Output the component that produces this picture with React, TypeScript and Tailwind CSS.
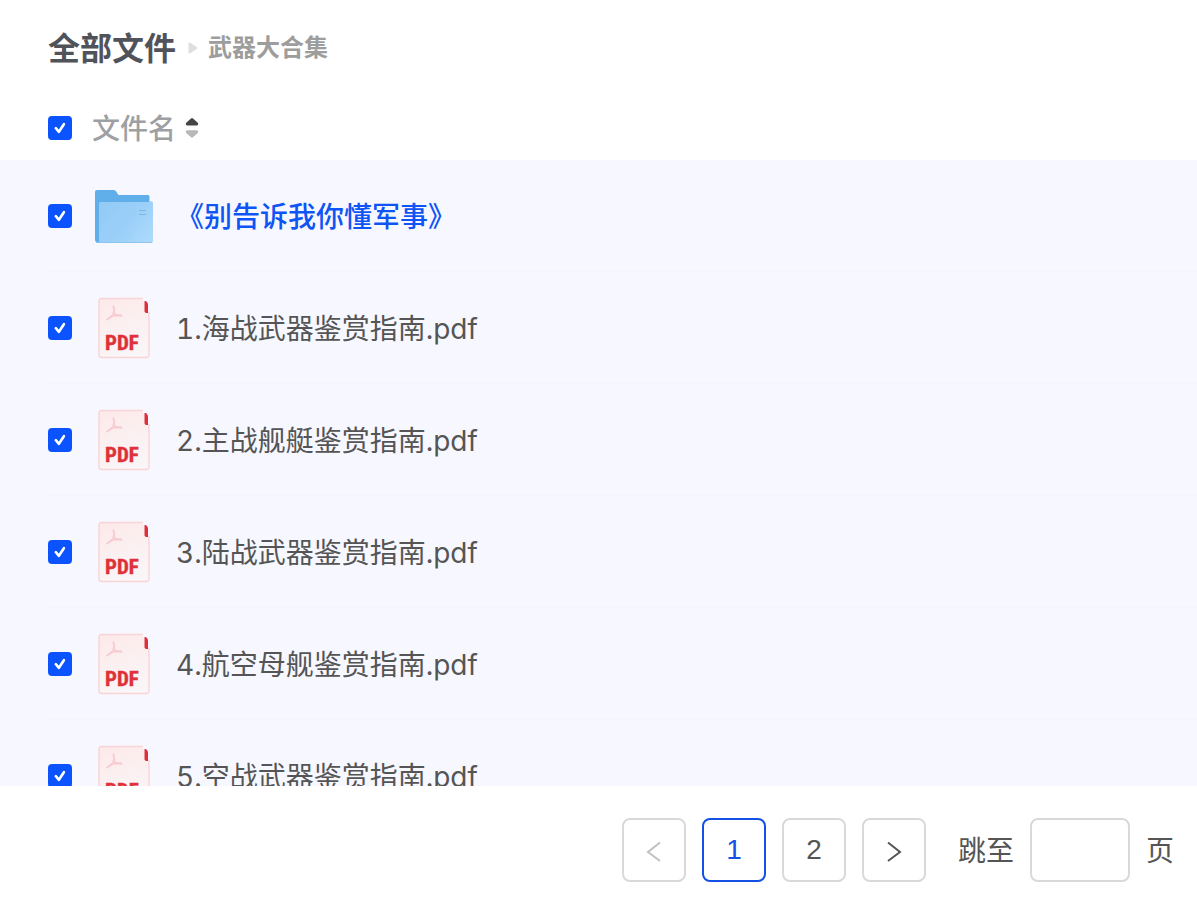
import * as React from 'react';
import { clsx } from 'clsx';

type FileItem = {
  id: number;
  name: string;
  kind: 'folder' | 'pdf';
};

const files: FileItem[] = [
  { id: 1, name: '《别告诉我你懂军事》', kind: 'folder' },
  { id: 2, name: '1.海战武器鉴赏指南.pdf', kind: 'pdf' },
  { id: 3, name: '2.主战舰艇鉴赏指南.pdf', kind: 'pdf' },
  { id: 4, name: '3.陆战武器鉴赏指南.pdf', kind: 'pdf' },
  { id: 5, name: '4.航空母舰鉴赏指南.pdf', kind: 'pdf' },
  { id: 6, name: '5.空战武器鉴赏指南.pdf', kind: 'pdf' },
];

function Checkbox({ label, checked, onChange }: { label: string; checked: boolean; onChange: () => void }) {
  return (
    <label className="relative block size-6 shrink-0 cursor-pointer">
      <input
        type="checkbox"
        aria-label={label}
        checked={checked}
        onChange={onChange}
        className="block size-6 appearance-none rounded border-2 border-[#d5d5d5] bg-white checked:border-[#0a53ff] checked:bg-[#0a53ff]"
      />
      {checked && (
        <svg className="pointer-events-none absolute inset-0" width="24" height="24" viewBox="0 0 24 24" fill="none">
          <path d="M7.8 12.2l3.1 3.6 5-7.6" stroke="#fff" strokeWidth="2.6" strokeLinecap="round" strokeLinejoin="round" />
        </svg>
      )}
    </label>
  );
}

function FolderIcon() {
  return (
    <svg width="64" height="64" viewBox="0 0 64 64" fill="none" className="shrink-0">
      <defs>
        <linearGradient id="folder-front" x1="8" y1="18" x2="60" y2="60" gradientUnits="userSpaceOnUse">
          <stop stopColor="#93cbf5" />
          <stop offset="0.5" stopColor="#9acff8" />
          <stop offset="1" stopColor="#afdbfc" />
        </linearGradient>
      </defs>
      <path d="M3 8a2 2 0 012-2h16.500a3 3 0 012.300 1.100L26.500 11H56a1.500 1.500 0 011.500 1.500V58H5a2 2 0 01-2-2z" fill="#60aeea" />
      <path d="M7 19.500A1.500 1.500 0 018.500 18h48l1.200-.8H59a2 2 0 012 2V57a2 2 0 01-2 2H7z" fill="url(#folder-front)" />
      <path d="M4 58.500h56" stroke="#8cc6f0" strokeWidth="1" />
      <path d="M47 26.500h7M47 30.500h7" stroke="#7fb6e2" strokeWidth="1" />
    </svg>
  );
}

function PdfIcon() {
  return (
    <svg width="64" height="64" viewBox="0 0 64 64" fill="none" className="shrink-0">
      <defs>
        <linearGradient id="pdf-page" x1="20" y1="2" x2="40" y2="62" gradientUnits="userSpaceOnUse">
          <stop stopColor="#fdeaea" />
          <stop offset="1" stopColor="#f9f6f8" />
        </linearGradient>
      </defs>
      <path d="M9.500 2.500H50l7 13V59a2.500 2.500 0 01-2.500 2.500h-45A2.500 2.500 0 017 59V5a2.500 2.500 0 012.500-2.500z" fill="url(#pdf-page)" />
      <path d="M51 2.500H9.500A2.500 2.500 0 007 5v54a2.500 2.500 0 002.500 2.500h45A2.500 2.500 0 0057 59V16" stroke="#f9d3d6" strokeWidth="1.400" />
      <path d="M52.500 5h1.200c1.400.7 2.300 2.200 2.300 4v8h-1.500c-1.200 0-2-.8-2-2z" fill="#dd3038" />
      <path
        d="M21.500 10.500c1 3.200.8 6.200-.5 8.500-1.200 2-3.500 3-6 4.500M21.500 16.500c1.500 2.300 4.500 3.300 8 3.300M18.500 20.500c3-1 6.500-1.300 10-1.200"
        stroke="#f6cdd0"
        strokeWidth="2"
        strokeLinecap="round"
        strokeLinejoin="round"
      />
      <text
        x="13"
        y="54"
        fill="#de3239"
        stroke="#de3239"
        strokeWidth="0.4"
        fontSize="21"
        fontWeight="700"
        fontFamily="'Roboto Condensed', 'Open Sans Condensed', Roboto, sans-serif"
      >
        PDF
      </text>
    </svg>
  );
}

function PageButton({ label, active, disabled, onClick, children }: {
  label: string;
  active?: boolean;
  disabled?: boolean;
  onClick: () => void;
  children: React.ReactNode;
}) {
  return (
    <button
      type="button"
      aria-label={label}
      disabled={disabled}
      onClick={onClick}
      className={clsx(
        'flex size-16 items-center justify-center rounded-lg border-2 bg-white',
        active && 'border-[#1450e6] text-[#1450e6]',
        !active && 'border-[#d9d9d9]',
        disabled && 'text-[#c0c0c0]',
      )}
    >
      {children}
    </button>
  );
}

export default function App() {
  const [selected, setSelected] = React.useState<number[]>(files.map((f) => f.id));
  const [page, setPage] = React.useState(1);

  const allSelected = selected.length === files.length;

  const toggle = (id: number) => {
    setSelected((prev) => (prev.includes(id) ? prev.filter((x) => x !== id) : [...prev, id]));
  };

  return (
    <div className="flex h-screen flex-col bg-white font-[Inter,'Noto_Sans_CJK_SC',sans-serif] text-[#555]">
      <nav className="flex h-24 shrink-0 items-center pl-12">
        <a href="#" className="pt-0.5 text-[32px] leading-12 font-bold text-[#51535b]">全部文件</a>
        <svg width="32" height="16" viewBox="0 0 32 16" className="shrink-0">
          <path d="M12.500 3.500v9c0 .9 1 1.400 1.700.8l6.500-4.400c.6-.5.600-1.300 0-1.800l-6.500-4.400c-.7-.6-1.700-.1-1.700.8z" fill="#dedede" />
        </svg>
        <span className="text-2xl font-bold text-[#9d9d9d]">武器大合集</span>
      </nav>

      <div className="flex h-16 shrink-0 items-center gap-5 pl-12">
        <Checkbox label="全选" checked={allSelected} onChange={() => setSelected(allSelected ? [] : files.map((f) => f.id))} />
        <button type="button" className="flex items-center gap-2 text-[28px] leading-10 font-medium text-[#9d9fa3]">
          <span className="pt-0.5">文件名</span>
          <svg width="16" height="24" viewBox="0 0 16 24">
            <path d="M7 2.500a1.500 1.500 0 012 0l4.500 4c1.300 1.200.8 3-1 3h-9c-1.800 0-2.300-1.800-1-3z" fill="#454545" />
            <path d="M7 21.300a1.500 1.500 0 002 0l4.500-4c1.300-1.200.8-3-1-3h-9c-1.800 0-2.300 1.800-1 3z" fill="#b8b8b8" />
          </svg>
        </button>
      </div>

      <ul className="min-h-0 flex-1 overflow-y-auto bg-[#f7f8ff] [scrollbar-width:none]">
        {files.map((file) => (
          <li key={file.id} className="ml-12 flex h-28 items-center gap-5 shadow-[inset_0_-2px_#f5f6fb]">
            <Checkbox label={file.name} checked={selected.includes(file.id)} onChange={() => toggle(file.id)} />
            <a href="#" className="flex items-center gap-5 text-[28px] leading-10 tabular-nums">
              {file.kind === 'folder' ? <FolderIcon /> : <PdfIcon />}
              <span className={clsx('pt-0.5', file.kind === 'folder' && 'font-medium text-[#0f55f5]')}>{file.name}</span>
            </a>
          </li>
        ))}
      </ul>

      <footer className="flex h-32 shrink-0 items-center justify-end gap-4 pr-[23px] font-['Liberation_Sans','Noto_Sans_CJK_SC',sans-serif] text-[28px] leading-10">
        <PageButton label="上一页" disabled={page === 1} onClick={() => setPage(1)}>
          <svg width="24" height="24" viewBox="0 0 24 24" fill="none" stroke="currentColor" strokeWidth="2">
            <path d="M18 4.500L6 14l12 9" />
          </svg>
        </PageButton>
        {[1, 2].map((n) => (
          <PageButton key={n} label={`第${n}页`} active={page === n} onClick={() => setPage(n)}>
            {n}
          </PageButton>
        ))}
        <PageButton label="下一页" disabled={page === 2} onClick={() => setPage(2)}>
          <svg width="24" height="24" viewBox="0 0 24 24" fill="none" stroke="currentColor" strokeWidth="2">
            <path d="M6 4.500L18 14 6 23" />
          </svg>
        </PageButton>
        <label htmlFor="jump" className="pt-1 pl-4">跳至</label>
        <input id="jump" type="text" className="h-16 w-25 rounded-lg border-2 border-[#d9d9d9] bg-white px-3 outline-none" />
        <span className="pt-1">页</span>
      </footer>
    </div>
  );
}
